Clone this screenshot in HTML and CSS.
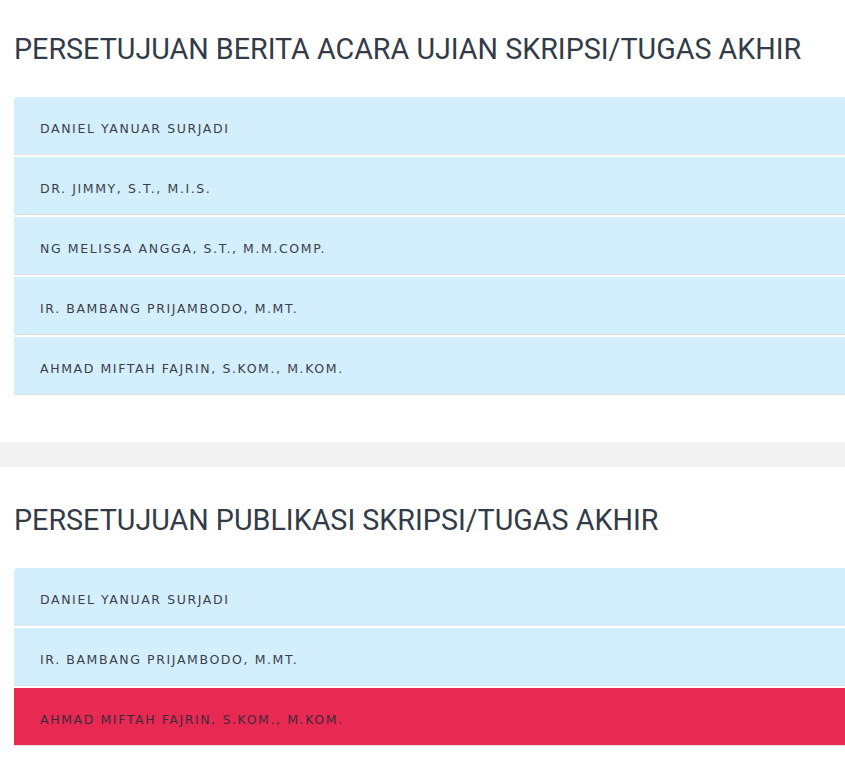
FILE: index.html
```html
<!DOCTYPE html>
<html>
<head>
  <title>Persetujuan Skripsi</title>
  <link rel="stylesheet" href="styles.css">
</head>
<body>

  <div class="section">
    <h2 class="title">PERSETUJUAN BERITA ACARA UJIAN SKRIPSI/TUGAS AKHIR</h2>
    <div class="list">
      <div class="item">DANIEL YANUAR SURJADI</div>
      <div class="item">DR. JIMMY, S.T., M.I.S.</div>
      <div class="item">NG MELISSA ANGGA, S.T., M.M.COMP.</div>
      <div class="item">IR. BAMBANG PRIJAMBODO, M.MT.</div>
      <div class="item">AHMAD MIFTAH FAJRIN, S.KOM., M.KOM.</div>
    </div>
  </div>

  <div class="divider"></div>

  <div class="section section-second">
    <h2 class="title">PERSETUJUAN PUBLIKASI SKRIPSI/TUGAS AKHIR</h2>
    <div class="list">
      <div class="item">DANIEL YANUAR SURJADI</div>
      <div class="item">IR. BAMBANG PRIJAMBODO, M.MT.</div>
      <div class="item rejected">AHMAD MIFTAH FAJRIN, S.KOM., M.KOM.</div>
    </div>
  </div>

</body>
</html>
```

FILE: styles.css
```css
body {
  margin: 0;
  font-family: Roboto, "Noto Sans", sans-serif;
  background: #fff;
  overflow: hidden;
}
.section {
  padding: 31px 0 48px 14px;
  overflow: hidden;
}
.section-second {
  padding-top: 35px;
}
.title {
  margin: 0 0 30px 0;
  font-size: 28.7px;
  font-weight: 400;
  line-height: 36px;
  color: #333b48;
}
.list {
  display: flex;
  flex-direction: column;
  gap: 3px;
  margin-right: -20px;
}
.item {
  display: flex;
  align-items: center;
  box-sizing: border-box;
  height: 57px;
  padding-left: 26px;
  padding-top: 6px;
  background-color: #d3eefd;
  box-shadow: 0 1px 1px rgba(0, 0, 0, 0.12);
  font-family: "DejaVu Sans", sans-serif;
  font-size: 12.5px;
  letter-spacing: 1.6px;
  color: #3a3f48;
}
.item:first-child {
  border-radius: 4px 0 0 0;
}
.item.rejected {
  background-color: #e82a52;
  color: #3b2a3a;
}
.divider {
  height: 25px;
  background: #f2f2f2;
}
```
